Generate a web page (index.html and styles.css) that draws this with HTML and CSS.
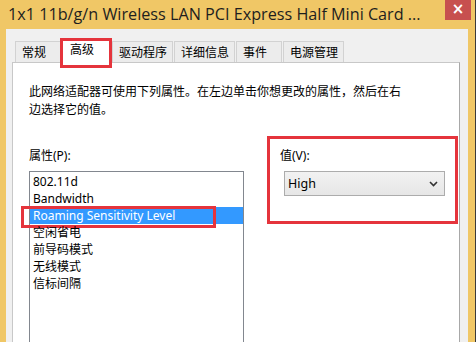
FILE: index.html
```html
<!DOCTYPE html>
<html>
<head>
<meta charset="utf-8">
<link rel="stylesheet" href="styles.css">
</head>
<body>
<div class="window">
  <div class="titlebar">
    <div class="title">1x1 11b/g/n Wireless LAN PCI Express Half Mini Card ...</div>
    <div class="capx">×</div>
  </div>
  <div class="client">
    <div class="tabs">
      <div class="tab">常规</div>
      <div class="tab active">高级<span class="mark mark-tab"></span></div>
      <div class="tab">驱动程序</div>
      <div class="tab">详细信息</div>
      <div class="tab">事件</div>
      <div class="tab">电源管理</div>
    </div>
    <div class="panel">
      <p class="desc">此网络适配器可使用下列属性。在左边单击你想更改的属性，然后在右边选择它的值。</p>
      <div class="cols">
        <div class="col-left">
          <div class="label">属性(P):</div>
          <ul class="list">
            <li>802.11d</li>
            <li>Bandwidth</li>
            <li class="sel">Roaming Sensitivity Level<span class="mark mark-item"></span></li>
            <li>空闲省电</li>
            <li>前导码模式</li>
            <li>无线模式</li>
            <li>信标间隔</li>
          </ul>
        </div>
        <div class="col-right">
          <span class="mark mark-value"></span>
          <div class="label">值(V):</div>
          <div class="select">
            <span>High</span>
            <svg class="chev" width="9" height="6" viewBox="0 0 9 6"><path d="M1 1 L4.5 4.5 L8 1" fill="none" stroke="#333" stroke-width="1.6"/></svg>
          </div>
        </div>
      </div>
    </div>
  </div>
</div>
</body>
</html>
```

FILE: styles.css
```css
* { box-sizing: border-box; }
html, body { margin: 0; padding: 0; }
body {
  width: 476px;
  height: 342px;
  overflow: hidden;
  font-family: "Noto Sans", "Noto Sans CJK SC", sans-serif;
  font-size: 12px;
  color: #000;
}
.window {
  width: 476px;
  height: 342px;
  background: #f0c766;
  border-right: 1px solid #3a3a3a;
  padding: 0 7px 0 6px;
  display: flex;
  flex-direction: column;
  overflow: hidden;
}
.titlebar {
  height: 29px;
  flex: none;
  display: flex;
  align-items: flex-start;
}
.title {
  font-family: "Open Sans", "Noto Sans", sans-serif;
  font-size: 16.2px;
  color: #1e1e1e;
  margin-left: 2px;
  margin-top: 4px;
  line-height: 20px;
  white-space: nowrap;
  width: 437px;
  flex: none;
}
.capx {
  flex: none;
  width: 26px;
  height: 20px;
  background: #c7504f;
  color: #fff;
  font-family: "DejaVu Sans", sans-serif;
  font-weight: bold;
  font-size: 15px;
  line-height: 18px;
  text-align: center;
}
.client {
  flex: 1;
  background: #f0f0f0;
  padding: 9px 8px 0 6px;
  display: flex;
  flex-direction: column;
}
.tabs {
  display: flex;
  align-items: flex-end;
  padding-left: 3px;
  height: 24px;
  position: relative;
  z-index: 2;
}
.tab {
  height: 21px;
  min-width: 46px;
  padding: 0 5px 0 6px;
  line-height: 19px;
  background: #ececec;
  border: 1px solid #d2d2d2;
  border-bottom: none;
  margin-right: 1px;
  font-family: "Noto Sans CJK SC", sans-serif;
  font-size: 12px;
  position: relative;
}
.tab.active {
  height: 25px;
  background: #fff;
  width: 49px;
  margin: 0 2px -1px -1px;
  padding-left: 8px;
  line-height: 20px;
}
.panel {
  flex: 1;
  background: #fff;
  border: 1px solid #c8c8c8;
  border-right-color: #a8a8a8;
  border-bottom: none;
  padding: 19px 14px 0 16px;
  position: relative;
  z-index: 1;
}
.desc {
  margin: 0;
  width: 376px;
  line-height: 18px;
  font-family: "Noto Sans CJK SC", sans-serif;
  font-size: 12px;
}
.cols {
  display: flex;
  margin-top: 29px;
}
.col-left {
  width: 216px;
}
.col-right {
  margin-left: 36px;
  position: relative;
}
.label {
  line-height: 18px;
  height: 18px;
  margin-bottom: 6px;
  font-family: "Noto Sans", "Noto Sans CJK SC", sans-serif;
}
.list {
  list-style: none;
  margin: 0;
  padding: 1px 0 0 0;
  border: 1px solid #82878f;
  height: 200px;
  position: relative;
}
.list li {
  height: 17px;
  line-height: 17px;
  padding-left: 3px;
  position: relative;
  white-space: nowrap;
}
.list li.sel {
  background: #3399ff;
  color: #fff;
}
.select {
  margin-left: 4px;
  width: 161px;
  height: 25px;
  border: 1px solid #acacac;
  background: linear-gradient(#f2f2f2, #e6e6e6);
  display: flex;
  align-items: center;
  justify-content: space-between;
  padding: 0 6px 0 3px;
  font-size: 12.5px;
}
.mark {
  position: absolute;
  border: 3px solid #e5343c;
  pointer-events: none;
}
.mark-tab {
  left: -2px;
  top: -1px;
  width: 52px;
  height: 30px;
}
.mark-item {
  left: -9px;
  top: -1px;
  width: 195px;
  height: 22px;
}
.mark-value {
  left: -13px;
  top: -11px;
  width: 191px;
  height: 88px;
}
```
